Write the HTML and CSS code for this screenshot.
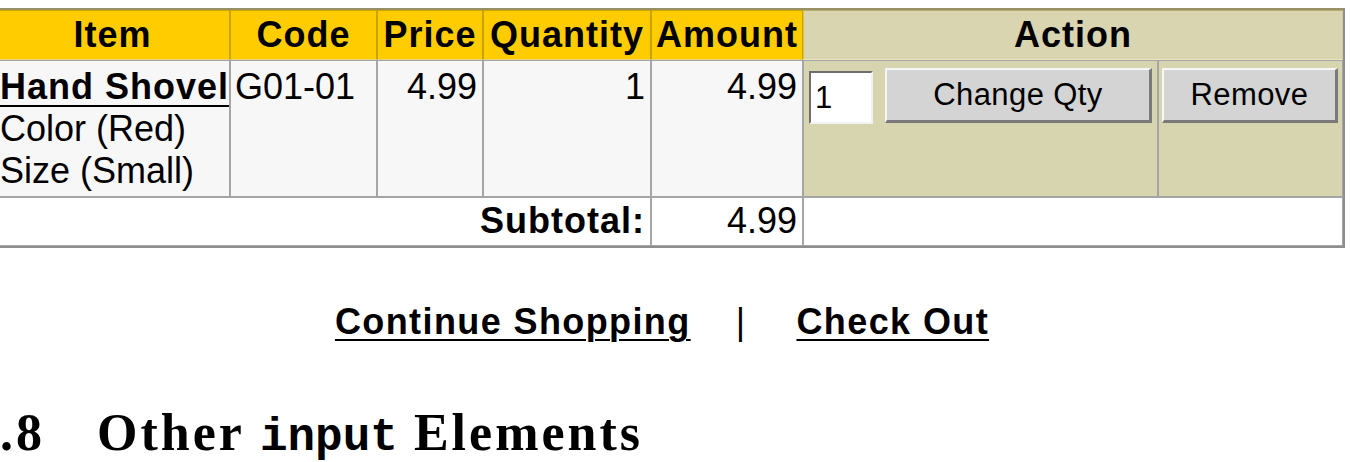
FILE: index.html
```html
<!DOCTYPE html>
<html>
<head>
<meta charset="utf-8">
<title>Shopping Cart</title>
<link rel="stylesheet" href="styles.css">
</head>
<body>
<div class="page">
  <table class="cart">
    <colgroup>
      <col class="c-item"><col class="c-code"><col class="c-price"><col class="c-qty"><col class="c-amt"><col class="c-act1"><col class="c-act2">
    </colgroup>
    <thead>
      <tr>
        <th>Item</th><th>Code</th><th>Price</th><th>Quantity</th><th>Amount</th><th colspan="2" class="act-head">Action</th>
      </tr>
    </thead>
    <tbody>
      <tr class="item-row">
        <td class="item"><a href="#" class="item-link">Hand Shovel</a><br>Color (Red)<br>Size (Small)</td>
        <td>G01-01</td>
        <td class="num">4.99</td>
        <td class="num">1</td>
        <td class="num">4.99</td>
        <td class="act"><div class="act-inner"><input class="qty" type="text" value="1"><button class="btn btn-change">Change Qty</button></div></td>
        <td class="act"><button class="btn btn-remove">Remove</button></td>
      </tr>
      <tr class="sub-row">
        <td colspan="4" class="sub-label">Subtotal:</td>
        <td class="num">4.99</td>
        <td colspan="2"></td>
      </tr>
    </tbody>
  </table>
  <p class="links"><a href="#">Continue Shopping</a><span class="sep">|</span><a href="#">Check Out</a></p>
  <h2 class="section"><span class="secnum">.8</span>Other <span class="tt">input</span> Elements</h2>
</div>
</body>
</html>
```
FILE: styles.css
```css
html, body {
  margin: 0;
  padding: 0;
  background: #ffffff;
  overflow: hidden;
}

.page {
  margin-left: -7px;
  padding-top: 8px;
  width: 1352px;
}

.cart {
  border-collapse: separate;
  border-spacing: 0;
  table-layout: fixed;
  width: 1352px;
  border: 2px solid #8e8e8e;
  border-top-color: #9a9068;
  font-family: "Liberation Sans", Arial, sans-serif;
  font-size: 36px;
  line-height: 42px;
  color: #000;
}

.c-item { width: 235px; }
.c-code { width: 147px; }
.c-price { width: 106px; }
.c-qty { width: 168px; }
.c-amt { width: 152px; }
.c-act1 { width: 355px; }
.c-act2 { width: 185px; }

.cart th {
  background: #ffcc00;
  font-weight: bold;
  letter-spacing: 1px;
  padding: 3px 2px;
  border: 1px solid #c9a400;
  border-bottom-color: #e8d27a;
  text-align: center;
  white-space: nowrap;
}

.cart th.act-head {
  background: #d8d5b0;
  border-color: #b8ae6a #cfc9a0 #ece7c0 #e0c040;
}

.cart td {
  background: #f7f7f7;
  border: 1px solid #a5a5a5;
  padding: 5px 4px 4px 4px;
  vertical-align: top;
  text-align: left;
  white-space: nowrap;
}

.cart td.num {
  text-align: right;
  padding-right: 5px;
}

.item-link {
  color: #000;
  font-weight: bold;
  letter-spacing: 1px;
  text-decoration: underline;
  text-decoration-thickness: 2px;
  text-underline-offset: 6px;
}

.cart td.act {
  background: #d7d4b0;
  padding: 7px 4px 4px 5px;
}

.cart td.act + td.act {
  padding-left: 3px;
}

.act-inner {
  display: flex;
  align-items: flex-start;
  gap: 12px;
}

.qty {
  box-sizing: border-box;
  width: 64px;
  height: 53px;
  margin: 3px 0 0 0;
  padding: 0 4px;
  border: 2px solid;
  border-color: #6e6e6e #f2f2f2 #f2f2f2 #6e6e6e;
  background: #ffffff;
  font-family: "Liberation Sans", Arial, sans-serif;
  font-size: 31px;
  color: #000;
  outline: none;
}

.btn {
  box-sizing: border-box;
  height: 55px;
  margin: 0;
  padding: 0;
  border-style: solid;
  border-width: 2px 3px 3px 2px;
  border-color: #f6f6f6 #7a7a7a #7a7a7a #f6f6f6;
  background: #d4d4d4;
  font-family: "Liberation Sans", Arial, sans-serif;
  font-size: 31px;
  letter-spacing: 0.4px;
  color: #000;
}

.btn-change { width: 267px; }
.btn-remove { width: 176px; }

.sub-row td {
  background: #ffffff;
  padding-top: 2px;
  padding-bottom: 3px;
}

.cart td.sub-label {
  text-align: right;
  font-weight: bold;
  letter-spacing: 1px;
  padding-right: 5px;
}

.links {
  display: flex;
  justify-content: center;
  margin: 53px 0 0 0;
  padding-right: 14px;
  font-family: "Liberation Sans", Arial, sans-serif;
  font-size: 36px;
  line-height: 42px;
  font-weight: bold;
  letter-spacing: 1.4px;
}

.links a {
  color: #000;
  text-decoration: underline;
  text-decoration-thickness: 2px;
  text-underline-offset: 5px;
}

.sep {
  font-weight: normal;
  margin: 0 50px 0 45px;
}

.section {
  margin: 67px 0 0 7px;
  font-family: "Liberation Serif", "Times New Roman", serif;
  font-size: 52px;
  line-height: 46px;
  font-weight: bold;
  letter-spacing: 3px;
  white-space: nowrap;
}

.secnum {
  display: inline-block;
  width: 97px;
}

.tt {
  font-family: "Liberation Mono", "Courier New", monospace;
  font-size: 46px;
  letter-spacing: 0;
}
```
